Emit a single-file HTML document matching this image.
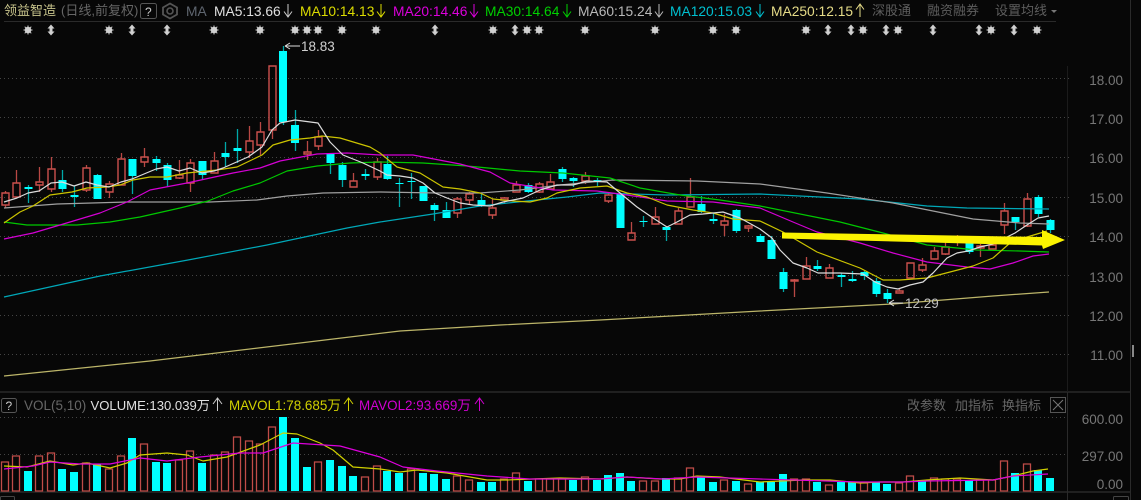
<!DOCTYPE html>
<html><head><meta charset="utf-8"><style>
html,body{margin:0;padding:0;background:#070707;width:1141px;height:500px;overflow:hidden}
svg{display:block}
text{font-family:"Liberation Sans","Noto Sans CJK SC",sans-serif;font-size:13.800px}
.ax{font-size:13.500px;fill:#777;text-anchor:end}
</style></head><body>
<svg width="1141" height="500" viewBox="0 0 1141 500" xmlns="http://www.w3.org/2000/svg">
<defs>
<g id="s" fill="#d0d0d0" stroke="#d0d0d0"><circle r="2.800"/><path stroke-width="1" d="M-4.500 0H4.500M0-4.500V4.500M-3.300-3.300L3.300 3.300M-3.300 3.300L3.300-3.300"/></g>
<path id="a" fill="#d0d0d0" d="M0-5.500L3.500-1.500H1.500V1.500H3.500L0 5.500L-3.500 1.500H-1.500V-1.500H-3.500Z"/>
</defs>
<rect width="1141" height="500" fill="#070707"/>

<!-- frame lines -->
<path d="M4 21.500H1056" stroke="#2a2a2a" stroke-width="1"/>
<path d="M0 392H1130M0 492H1130" stroke="#202020" stroke-width="2"/>
<path d="M1067.500 66V392" stroke="#1b1b1b" stroke-width="1"/>
<path d="M1067.500 392V500M1130.500 0V500" stroke="#2a2a2a" stroke-width="1"/>
<path d="M1133 345v12" stroke="#888" stroke-width="2"/>

<!-- grid -->
<path d="M0 78.500H1070M0 117.500H1070M0 157.500H1070M0 197.500H1070M0 236.500H1070M0 275.500H1070M0 315.500H1070M0 354.500H1070M0 417.500H1067M0 454.500H1067" stroke="#444" stroke-width="1" stroke-dasharray="1 3" fill="none"/>

<!-- header -->
<text x="4" y="15" fill="#c8c48c" style="font-size:13px">领益智造</text>
<text x="61" y="15" fill="#666" style="font-size:13px">(日线,前复权)</text>
<rect x="140.500" y="3.500" width="16" height="15" rx="2" fill="none" stroke="#555"/>
<text x="145" y="16" fill="#ccc" style="font-size:12px">?</text>
<g fill="none" stroke="#555"><path stroke-width="1.800" d="M170 3.500L177 7.500V14.500L170 18.500L163 14.500V7.500Z"/><circle cx="170" cy="11" r="3" stroke-width="1.600"/></g>
<text x="186" y="16" fill="#5f6670">MA</text>
<text x="214" y="16" fill="#e0e0e0">MA5:13.66</text>
<text x="300" y="16" fill="#dcdc00">MA10:14.13</text>
<text x="393" y="16" fill="#dc00dc">MA20:14.46</text>
<text x="485" y="16" fill="#00d000">MA30:14.64</text>
<text x="578" y="16" fill="#b8b8b8">MA60:15.24</text>
<text x="670" y="16" fill="#00c0d0">MA120:15.03</text>
<text x="771" y="16" fill="#e6dc88">MA250:12.15</text>
<text x="872" y="15" fill="#5e5e5e" style="font-size:13px">深股通</text>
<text x="927" y="15" fill="#5e5e5e" style="font-size:13px">融资融券</text>
<text x="995" y="15" fill="#5e5e5e" style="font-size:13px">设置均线</text>
<path d="M1051 10h6l-3 3z" fill="#777"/>
<g fill="none" stroke-width="1">
<path stroke="#ccc" d="M288 4V17M284 11.500L288 17L292 11.500"/>
<path stroke="#dcdc00" d="M381 4V17M377 11.500L381 17L385 11.500"/>
<path stroke="#dc00dc" d="M474 4V17M470 11.500L474 17L478 11.500"/>
<path stroke="#00d000" d="M567 4V17M563 11.500L567 17L571 11.500"/>
<path stroke="#b8b8b8" d="M659 4V17M655 11.500L659 17L663 11.500"/>
<path stroke="#00c0d0" d="M760 4V17M756 11.500L760 17L764 11.500"/>
<path stroke="#e6dc88" d="M860 17V4M856 9.500L860 4L864 9.500"/>
</g>

<!-- markers -->
<g>
<use href="#s" x="28" y="30"/><use href="#a" x="51" y="30"/><use href="#s" x="109" y="30"/><use href="#a" x="132" y="30"/><use href="#a" x="167" y="30"/><use href="#s" x="214" y="30"/><use href="#s" x="260" y="30"/><use href="#s" x="295" y="30"/><use href="#s" x="307" y="30"/><use href="#s" x="318" y="30"/><use href="#s" x="342" y="30"/><use href="#s" x="376" y="30"/><use href="#a" x="435" y="30"/><use href="#s" x="493" y="30"/><use href="#a" x="515" y="30"/><use href="#s" x="527" y="30"/><use href="#s" x="539" y="30"/><use href="#s" x="585" y="30"/><use href="#s" x="655" y="30"/><use href="#s" x="713" y="30"/><use href="#s" x="736" y="30"/><use href="#s" x="806" y="30"/><use href="#a" x="828" y="30"/><use href="#a" x="851" y="30"/><use href="#s" x="863" y="30"/><use href="#a" x="886" y="30"/><use href="#s" x="898" y="30"/><use href="#a" x="933" y="30"/><use href="#a" x="979" y="30"/><use href="#s" x="991" y="30"/><use href="#a" x="1014" y="30"/><use href="#s" x="1037" y="30"/>
</g>

<!-- axis labels -->
<text class="ax" x="1123" y="85">18.00</text>
<text class="ax" x="1123" y="124">17.00</text>
<text class="ax" x="1123" y="163">16.00</text>
<text class="ax" x="1123" y="203">15.00</text>
<text class="ax" x="1123" y="242">14.00</text>
<text class="ax" x="1123" y="282">13.00</text>
<text class="ax" x="1123" y="321">12.00</text>
<text class="ax" x="1123" y="360">11.00</text>
<text class="ax" x="1123" y="424">600.00</text>
<text class="ax" x="1123" y="461">297.00</text>
<text class="ax" x="1123" y="489">0.00</text>

<!-- candles: cyan wicks -->
<path fill="none" stroke="#00a8a8" stroke-width="1.300" d="M28.500 185V203M62.500 170V192M74.500 186V207M97.500 174V199M132.500 159V194M156.500 156V171M167.500 163V187M202.500 161V180M225.500 142V167M237.500 129V163M283.500 46V125M295.500 110V151M330.500 154V174M342.500 162V187M365.500 169V180M387.500 156V180M399.500 178V207M411.500 173V199M423.500 186V201M434.500 203V221M446.500 202V218M481.500 193V207M528.500 183V193M562.500 167V182M573.500 177V187M597.500 178V186M620.500 194V228M643.500 216V227M666.500 227V241M701.500 196V213M713.500 213V224M736.500 209V233M760.500 234V242M771.500 236V259M783.500 268V292M817.500 260V271M841.500 273V287M852.500 271V282M864.500 271V280M876.500 278V297M887.500 289V303M969.500 238V254M1015.500 217V230M1038.500 195V217M1050.500 219V233"/>
<!-- candles: cyan bodies -->
<path fill="#00ffff" d="M24.500 187h8v2h-8zM58.500 180h8v9h-8zM70.500 195h8v2h-8zM93.500 175h8v24h-8zM128.500 159h8v17h-8zM152.500 159h8v4h-8zM163.500 165h8v15h-8zM198.500 161h8v14h-8zM221.500 153h8v4h-8zM233.500 148h8v3h-8zM279 51h8v71h-8zM291 125h8v18h-8zM326.500 154h8v9h-8zM338.500 165h8v15h-8zM361.500 174h8v2h-8zM383.500 164h8v15h-8zM395.500 183h8v1h-8zM407.500 181h8v1h-8zM419.500 186h8v15h-8zM430.500 205h8v5h-8zM442.500 210h8v8h-8zM477.500 200h8v6h-8zM524.500 185h8v7h-8zM558.500 169h8v10h-8zM569.500 178h8v3h-8zM593.500 180h8v2h-8zM616.500 194h8v34h-8zM639.500 221h8v1h-8zM662.500 227h8v3h-8zM697.500 204h8v8h-8zM709.500 219h8v2h-8zM732.500 210h8v21h-8zM756.500 236h8v6h-8zM767.500 240h8v19h-8zM779.500 272h8v17h-8zM813.500 266h8v3h-8zM837.500 275h8v2h-8zM848.500 279h8v2h-8zM860.500 272h8v4h-8zM872.500 281h8v13h-8zM883.500 293h8v6h-8zM965.500 241h8v11h-8zM1011.500 217h8v5h-8zM1034.500 197h8v17h-8zM1046.500 220h8v10h-8z"/>
<!-- candles: red wicks -->
<path fill="none" stroke="#b84844" stroke-width="1.300" d="M5.500 191V193M5.500 205V208M16.500 170V183M16.500 197V198M39.500 167V182M39.500 185V192M51.500 157V169M51.500 189V192M86.500 165V168M86.500 190V192M109.500 181V184M109.500 192V198M121.500 153V159M144.500 148V157M144.500 162V167M179.500 160V175M179.500 178V179M190.500 159V163M190.500 183V192M214.500 152V161M249.500 126V141M249.500 152V158M260.500 122V132M260.500 145V155M272.500 130V139M307.500 141V152M307.500 154V160M318.500 130V137M318.500 146V150M353.500 173V181M377.500 158V162M377.500 177V180M457.500 197V199M457.500 213V218M469.500 192V194M469.500 200V205M492.500 199V208M492.500 215V219M504.500 197V198M504.500 200V204M516.500 181V185M539.500 182V184M539.500 192V193M550.500 174V182M585.500 172V176M585.500 181V184M608.500 192V195M608.500 201V203M631.500 222V233M655.500 207V217M678.500 208V211M690.500 178V197M724.500 214V221M724.500 225V236M748.500 225V226M748.500 228V232M794.500 279V280M794.500 281V297M806.500 257V266M829.500 264V268M899.500 289V291M922.500 258V265M922.500 270V272M934.500 247V251M945.500 238V247M945.500 254V255M957.500 235V240M957.500 242V246M980.500 244V246M980.500 248V257M992.500 240V245M1004.500 203V211M1004.500 225V234M1027.500 193V199M1027.500 226V227"/>
<!-- candles: red bodies -->
<path fill="none" stroke="#cc514d" stroke-width="1.400" d="M2 193h7v12h-7zM13 183h7v14h-7zM36 182h7v3h-7zM48 169h7v20h-7zM83 168h7v22h-7zM106 184h7v8h-7zM118 159h7v26h-7zM141 157h7v5h-7zM176 175h7v3h-7zM187 163h7v20h-7zM211 161h7v12h-7zM246 141h7v11h-7zM257 132h7v13h-7zM269 66h7v64h-7zM304 152h7v2h-7zM315 137h7v9h-7zM350 181h7v6h-7zM374 162h7v15h-7zM454 199h7v14h-7zM466 194h7v6h-7zM489 208h7v7h-7zM501 198h7v2h-7zM513 185h7v7h-7zM536 184h7v8h-7zM547 182h7v7h-7zM582 176h7v5h-7zM605 195h7v6h-7zM628 233h7v7h-7zM652 217h7v7h-7zM675 211h7v13h-7zM687 197h7v10h-7zM721 221h7v4h-7zM745 226h7v2h-7zM791 280h7v1h-7zM803 266h7v13h-7zM826 268h7v10h-7zM896 291h7v2h-7zM907 263h7v15h-7zM919 265h7v5h-7zM931 251h7v8h-7zM942 247h7v7h-7zM954 240h7v2h-7zM977 246h7v2h-7zM989 245h7v4h-7zM1001 211h7v14h-7zM1024 199h7v27h-7z"/>

<!-- moving averages -->
<g fill="none" stroke-width="1.200" stroke-linejoin="round">
<polyline stroke="#dcd47a" stroke-opacity=".85" points="4,376 150,361 300,343 400,331 500,325 600,320 760,311 893,304 993,296 1049,292"/>
<polyline stroke="#00a8b8" points="4,297 100,276 188,260 267,245 347,228 380,222 433,214 480,206 527,201 567,197 600,193 667,195 760,194 860,199 927,206 967,208 1049,209"/>
<polyline stroke="#a0a0a0" points="4,208 57,204 127,202 210,202 257,200 287,196 323,193 380,192 437,193 480,193 520,190 560,185 613,180 697,181 760,184 827,193 893,203 973,219 1020,223 1049,224"/>
<polyline stroke="#00c800" points="4,222 27,225 77,225 110,222 140,217 180,208 208,201 233,191 260,183 287,171 317,166 350,163 380,162 423,163 467,166 520,171 563,173 610,178 640,188 680,195 720,200 760,206 840,222 883,233 927,245 977,250 1020,251 1049,252"/>
<polyline stroke="#d400d4" points="4,239 33,233 60,225 100,213 127,202 150,190 187,183 233,173 260,168 280,161 317,154 347,153 380,155 413,155 460,164 490,172 510,183 553,190 597,191 627,195 667,201 713,202 760,208 793,222 817,232 860,243 893,253 927,262 967,267 990,269 1013,263 1033,256 1049,254"/>
<polyline stroke="#ccc400" points="4,223 20,212 33,206 50,195 72,192 87,188 107,187 120,185 133,180 150,177 167,177 187,173 217,170 237,167 262,155 273,145 290,140 310,138 322,136 340,138 370,147 380,153 397,167 420,173 443,187 460,189 480,193 493,199 513,201 530,202 547,198 557,193 580,188 607,186 627,193 647,197 667,205 693,210 713,213 733,219 760,221 783,232 817,252 860,268 883,280 900,280 927,278 973,266 993,258 1010,243 1027,237 1047,231"/>
<polyline stroke="#dcdcdc" points="4,202 17,198 28,193 39,191 51,183 62,182 74,186 86,182 97,185 109,187 121,182 132,179 144,174 156,169 167,167 179,171 190,168 202,173 214,171 223,168 248,157 262,147 272,130 280,123 295,120 318,123 330,142 343,155 363,163 380,171 387,175 400,176 413,178 423,183 435,193 447,198 460,203 473,205 490,206 503,202 523,198 540,190 557,185 573,185 587,181 607,182 620,193 637,207 653,218 667,227 677,222 690,215 703,214 723,212 740,218 760,229 772,238 780,250 793,263 807,268 818,273 840,273 863,274 875,282 887,287 898,289 910,285 923,282 933,273 947,258 957,253 968,251 980,247 993,244 1005,238 1015,233 1027,225 1038,218 1049,216"/>
</g>

<!-- big arrow -->
<polygon fill="#fbf300" points="782,232.500 1042,237 1042,230 1065,240 1043,249 1042,245.500 782,238.500"/>

<!-- price labels -->
<path d="M285 46H300M285 46L290 43M285 46L290 49" fill="none" stroke="#ddd"/>
<text x="301" y="51" fill="#d0d0d0" style="font-size:13.500px">18.83</text>
<path d="M889 303H903M889 303L894 300M889 303L894 306" fill="none" stroke="#ddd"/>
<text x="905" y="308" fill="#c0c0c0" style="font-size:13.500px">12.29</text>

<!-- volume header -->
<rect x="1.500" y="398.500" width="15" height="14" rx="2" fill="none" stroke="#555"/>
<text x="5.500" y="410" fill="#ccc" style="font-size:12px">?</text>
<text x="24" y="410" fill="#666" style="font-size:13.500px">VOL(5,10)</text>
<text x="90.500" y="410" fill="#e0e0e0" style="font-size:13.100px">VOLUME:130.039万</text>
<text x="229" y="410" fill="#d0d000" style="font-size:13.450px">MAVOL1:78.685万</text>
<text x="359" y="410" fill="#d000d0" style="font-size:13.450px">MAVOL2:93.669万</text>
<g fill="none"><path stroke="#ccc" d="M217.500 411V398M213 404L217.500 398L222 404"/><path stroke="#d0d000" d="M348.500 411V398M344 404L348.500 398L353 404"/><path stroke="#d000d0" d="M479.500 411V398M475 404L479.500 398L484 404"/></g>
<text x="907" y="410" fill="#666" style="font-size:13px">改参数</text>
<text x="955" y="410" fill="#666" style="font-size:13px">加指标</text>
<text x="1002" y="410" fill="#666" style="font-size:13px">换指标</text>
<rect x="1050.500" y="397.500" width="15" height="15" fill="none" stroke="#555"/>
<path d="M1053 400L1063 410M1063 400L1053 410" stroke="#777"/>

<!-- volume bars cyan -->
<path fill="#00ffff" d="M24 471h8v20h-8zM58 469h8v22h-8zM70 472h8v19h-8zM93 464h8v27h-8zM128 438h8v53h-8zM152 462h8v29h-8zM163 463h8v28h-8zM198 463h8v28h-8zM279 417h8v74h-8zM291 438h8v53h-8zM303 467h8v24h-8zM326 460h8v31h-8zM338 466h8v25h-8zM349 476h8v15h-8zM383 471h8v20h-8zM395 473h8v18h-8zM419 473h8v18h-8zM430 474h8v17h-8zM442 479h8v12h-8zM477 482h8v9h-8zM488 482h8v9h-8zM524 481h8v10h-8zM569 480h8v11h-8zM593 480h8v11h-8zM604 475h8v16h-8zM616 473h8v18h-8zM627 481h8v10h-8zM662 478h8v13h-8zM697 477h8v14h-8zM709 482h8v9h-8zM732 481h8v10h-8zM756 482h8v9h-8zM767 482h8v9h-8zM779 474h8v17h-8zM813 482h8v9h-8zM837 482h8v9h-8zM848 482h8v9h-8zM872 482h8v9h-8zM883 484h8v7h-8zM918 480h8v11h-8zM965 480h8v11h-8zM1011 473h8v18h-8zM1034 470h8v21h-8zM1046 478h8v13h-8z"/>
<!-- volume bars red -->
<path fill="none" stroke="#c04c48" stroke-width="1.300" d="M1.500 462h7v29h-7zM12.500 456h7v35h-7zM35.500 456h7v35h-7zM47.500 453h7v38h-7zM82.500 463h7v28h-7zM105.500 469h7v22h-7zM117.500 456h7v35h-7zM140.500 444h7v47h-7zM175.500 460h7v31h-7zM186.500 451h7v40h-7zM210.500 455h7v36h-7zM221.500 452h7v39h-7zM233.500 437h7v54h-7zM245.500 441h7v50h-7zM256.500 444h7v47h-7zM268.500 427h7v64h-7zM314.500 462h7v29h-7zM361.500 477h7v14h-7zM373.500 466h7v25h-7zM407.500 469h7v22h-7zM453.500 476h7v15h-7zM465.500 480h7v11h-7zM500.500 479h7v12h-7zM512.500 473h7v18h-7zM535.500 479h7v12h-7zM546.500 479h7v12h-7zM558.500 479h7v12h-7zM581.500 477h7v14h-7zM639.500 481h7v10h-7zM651.500 481h7v10h-7zM674.500 478h7v13h-7zM686.500 468h7v23h-7zM720.500 480h7v11h-7zM744.500 484h7v7h-7zM790.500 479h7v12h-7zM802.500 479h7v12h-7zM825.500 485h7v6h-7zM860.500 483h7v8h-7zM895.500 483h7v8h-7zM906.500 476h7v15h-7zM930.500 478h7v13h-7zM941.500 479h7v12h-7zM953.500 479h7v12h-7zM976.500 480h7v11h-7zM988.500 480h7v11h-7zM1000.500 461h7v30h-7zM1023.500 464h7v27h-7z"/>
<!-- volume lines -->
<g fill="none" stroke-width="1.200" stroke-linejoin="round">
<polyline stroke="#d0d000" points="4,466 27,467 50,461 73,465 87,463 110,468 127,463 140,455 167,453 187,455 203,461 227,457 260,445 283,433 297,434 320,443 333,450 353,467 380,469 400,472 417,470 447,473 487,480 507,480 533,479 560,478 600,479 627,477 660,479 680,479 697,476 720,477 760,482 803,480 830,480 860,483 880,482 903,482 927,480 960,478 993,480 1013,476 1033,471 1048,469"/>
<polyline stroke="#dc00dc" points="4,469 33,466 50,462 80,464 110,464 140,458 167,461 200,457 240,453 263,453 293,443 340,446 380,457 403,467 437,471 487,476 530,479 600,479 627,477 663,479 697,477 760,479 860,482 903,482 927,481 993,480 1013,476 1048,474"/>
</g>
<!-- bottom buttons -->
<rect x="0.500" y="496.500" width="14" height="8" rx="1" fill="none" stroke="#444"/>
<rect x="1113.500" y="496.500" width="15" height="8" rx="1" fill="none" stroke="#444"/>
</svg>
</body></html>
